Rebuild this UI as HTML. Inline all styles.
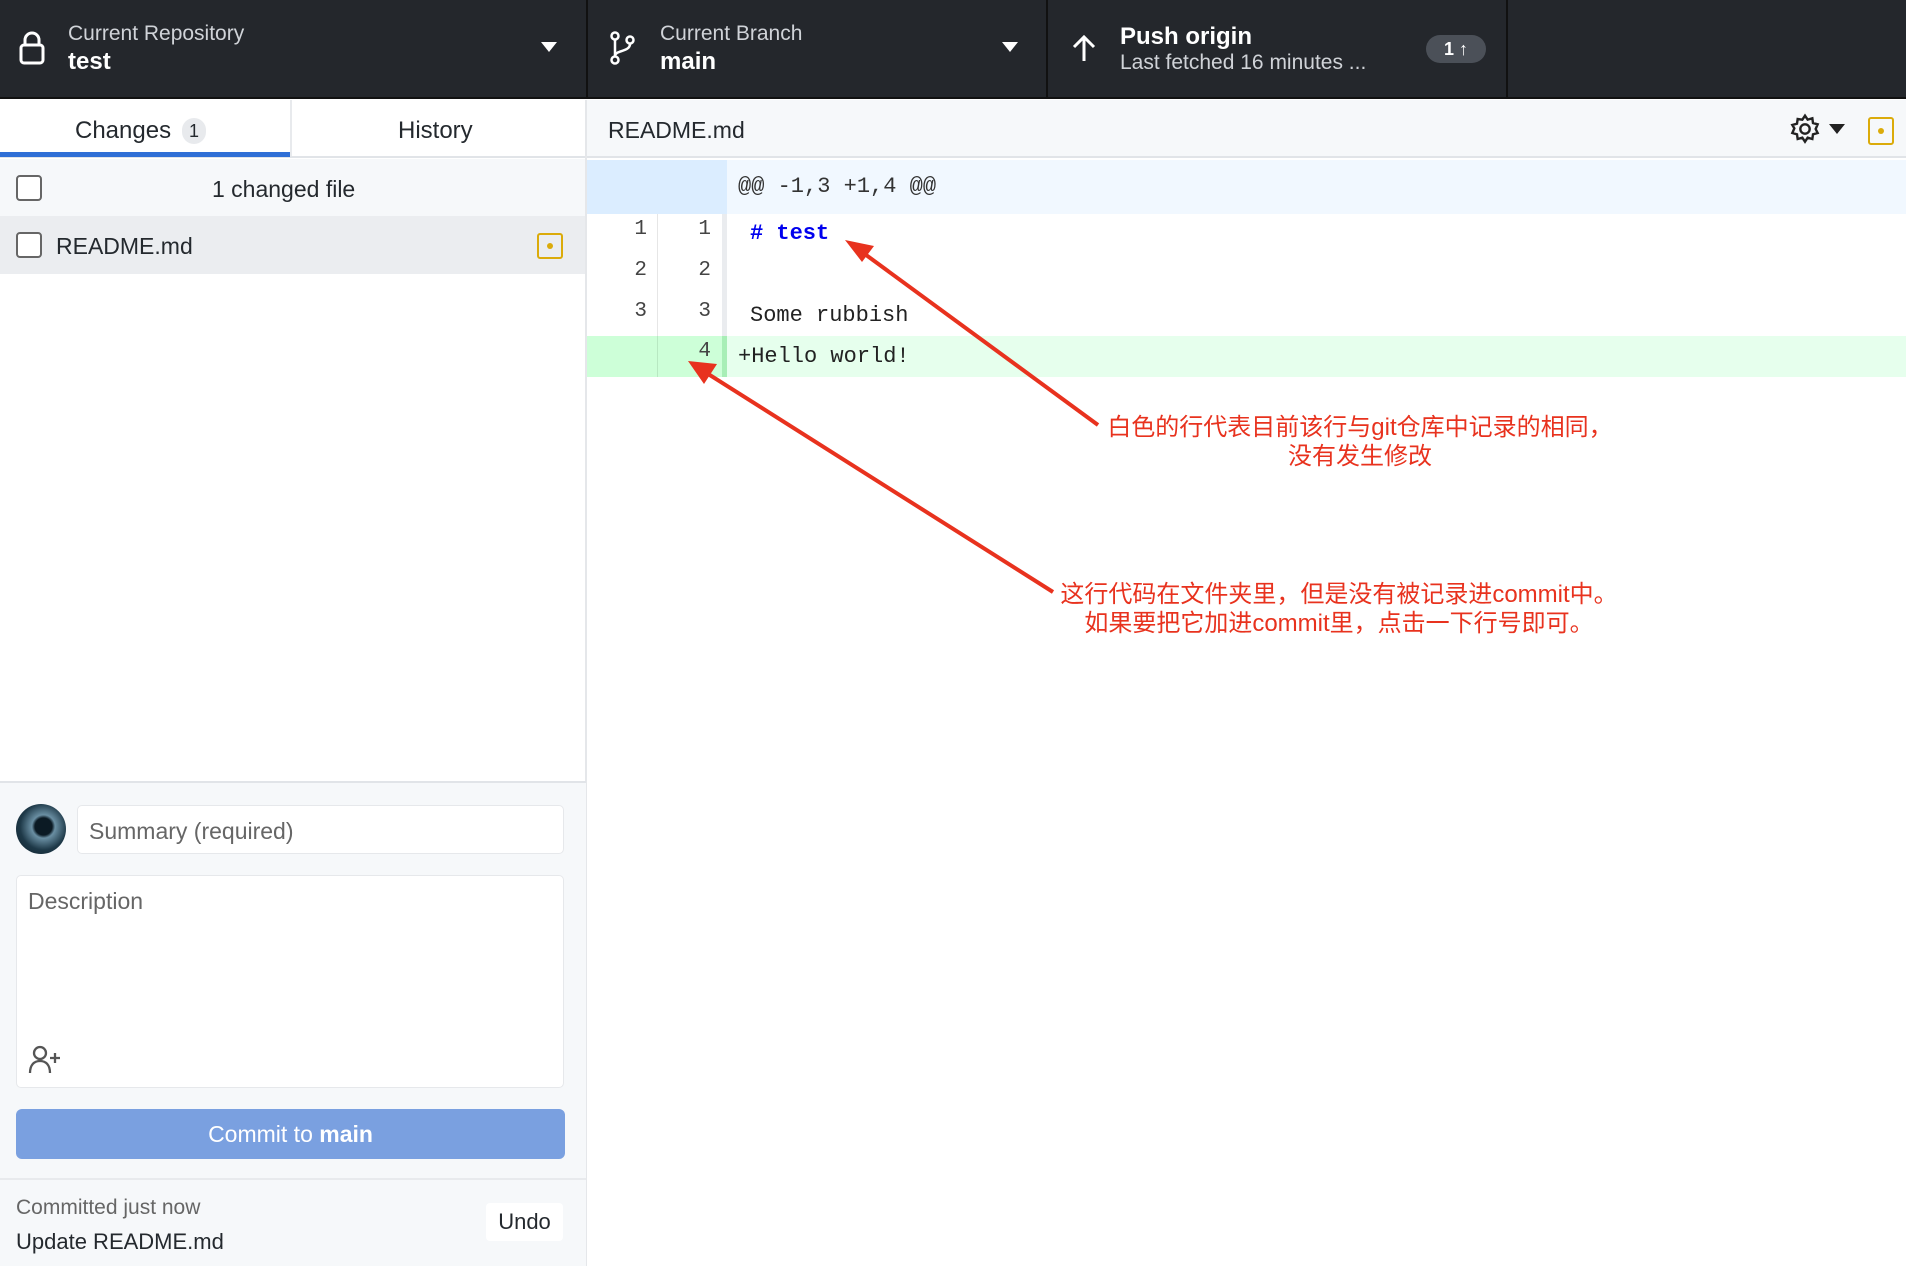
<!DOCTYPE html>
<html><head><meta charset="utf-8"><style>
*{box-sizing:border-box;margin:0;padding:0}
body{width:1906px;height:1266px;overflow:hidden;background:#fff;font-family:"Liberation Sans","Noto Sans CJK SC",sans-serif;position:relative;color:#24292e}
.a{position:absolute}
.hdr{left:0;top:0;width:1906px;height:99px;background:#24272c;border-bottom:2px solid #111}
.sep{top:0;width:2px;height:99px;background:#111}
.lbl{color:#d0d3d8;font-size:21px}
.val{color:#fff;font-size:24px;font-weight:bold}
.mono{font-family:"Liberation Mono",monospace;font-size:22px}
.cb{width:26px;height:26px;border:2px solid #666;border-radius:4px;background:#fff}
.ln{font-family:"Liberation Mono",monospace;font-size:21px;color:#444;text-align:right;width:60px}
.note{color:#e8321e;font-size:24px;text-align:center;width:600px;line-height:29px}
</style></head><body>
<div class="a hdr"></div>
<div class="a sep" style="left:586px"></div>
<div class="a sep" style="left:1046px"></div>
<div class="a sep" style="left:1506px"></div>
<svg class="a" style="left:18px;top:30px" width="28" height="36" viewBox="0 0 28 36"><rect x="3" y="15" width="22" height="18" rx="3" fill="none" stroke="#fff" stroke-width="3"/><path d="M7 15V10a7 7 0 0 1 14 0v5" fill="none" stroke="#fff" stroke-width="3"/></svg>
<div class="a lbl" style="left:68px;top:22px">Current Repository</div>
<div class="a val" style="left:68px;top:48px">test</div>
<svg class="a" style="left:541px;top:42px" width="16" height="10"><path d="M0 0h16L8 10z" fill="#fff"/></svg>
<svg class="a" style="left:609px;top:30px" width="28" height="36" viewBox="0 0 28 36" fill="none" stroke="#fff" stroke-width="2.5"><circle cx="6" cy="6" r="3.5"/><circle cx="6" cy="30" r="3.5"/><circle cx="21" cy="10" r="3.5"/><path d="M6 10v16M21 14c0 8-15 6-15 12"/></svg>
<div class="a lbl" style="left:660px;top:22px">Current Branch</div>
<div class="a val" style="left:660px;top:48px">main</div>
<svg class="a" style="left:1002px;top:42px" width="16" height="10"><path d="M0 0h16L8 10z" fill="#fff"/></svg>
<svg class="a" style="left:1072px;top:34px" width="24" height="28" viewBox="0 0 24 28" fill="none" stroke="#fff" stroke-width="3"><path d="M12 27V3M2 13L12 3l10 10"/></svg>
<div class="a val" style="left:1120px;top:23px">Push origin</div>
<div class="a lbl" style="left:1120px;top:51px">Last fetched 16 minutes ...</div>
<div class="a" style="left:1426px;top:35px;width:60px;height:28px;border-radius:14px;background:#4b5058;color:#fff;font-size:18px;font-weight:bold;text-align:center;line-height:28px">1 ↑</div>

<div class="a" style="left:0;top:100px;width:587px;height:58px;background:#fff;border-bottom:2px solid #e1e4e8"></div>
<div class="a" style="left:0;top:152px;width:290px;height:5px;background:#2f6fd6"></div>
<div class="a" style="left:290px;top:100px;width:2px;height:56px;background:#e8eaed"></div>
<div class="a" style="left:75px;top:117px;font-size:24px">Changes</div>
<div class="a" style="left:182px;top:118px;width:24px;height:26px;background:#e8eaed;border-radius:12px;font-size:18px;text-align:center;line-height:26px">1</div>
<div class="a" style="left:398px;top:117px;font-size:24px">History</div>
<div class="a" style="left:0;top:159px;width:587px;height:57px;background:#f6f8fa"></div>
<div class="a cb" style="left:16px;top:175px"></div>
<div class="a" style="left:212px;top:176px;font-size:23px">1 changed file</div>
<div class="a" style="left:0;top:216px;width:587px;height:58px;background:#ebedf0"></div>
<div class="a cb" style="left:16px;top:232px"></div>
<div class="a" style="left:56px;top:233px;font-size:23px">README.md</div>
<div class="a" style="left:537px;top:233px;width:26px;height:26px;border:2.5px solid #dbab0a;border-radius:3px"><div class="a" style="left:8px;top:8px;width:6px;height:6px;background:#dbab0a;border-radius:50%"></div></div>
<div class="a" style="left:585px;top:100px;width:2px;height:1166px;background:#e5e7ea"></div>

<div class="a" style="left:0;top:781px;width:586px;height:485px;background:#f6f8fa;border-top:2px solid #e1e4e8"></div>
<div class="a" style="left:16px;top:804px;width:50px;height:50px;border-radius:50%;background:radial-gradient(circle at 55% 45%,#0b1a24 0 22%,#6a8fa3 30%,#1e3948 60%,#0e1d27 100%)"></div>
<div class="a" style="left:77px;top:805px;width:487px;height:49px;background:#fff;border:1px solid #e6e8eb;border-radius:5px;font-size:23px;color:#666;padding:12px 11px">Summary (required)</div>
<div class="a" style="left:16px;top:875px;width:548px;height:213px;background:#fff;border:1px solid #e6e8eb;border-radius:5px;font-size:23px;color:#666;padding:12px 11px">Description</div>
<svg class="a" style="left:28px;top:1044px" width="36" height="30" viewBox="0 0 36 30" fill="none" stroke="#555" stroke-width="2.3"><circle cx="12" cy="9" r="6"/><path d="M2 29c0-8 4-12 10-12s10 4 10 12M27 9v10M22 14h10"/></svg>
<div class="a" style="left:16px;top:1109px;width:549px;height:50px;background:#7aa0e0;border-radius:6px;color:#fff;font-size:23px;text-align:center;line-height:50px">Commit to <b>main</b></div>
<div class="a" style="left:0;top:1178px;width:586px;height:2px;background:#e8eaed"></div>
<div class="a" style="left:16px;top:1196px;font-size:21px;color:#666">Committed just now</div>
<div class="a" style="left:16px;top:1229px;font-size:22px">Update README.md</div>
<div class="a" style="left:486px;top:1203px;width:77px;height:38px;background:#fff;border-radius:4px;font-size:22px;text-align:center;line-height:38px">Undo</div>

<div class="a" style="left:587px;top:100px;width:1319px;height:58px;background:#f6f8fa;border-bottom:2px solid #e1e4e8"></div>
<div class="a" style="left:608px;top:117px;font-size:23px">README.md</div>
<svg class="a" style="left:1789px;top:113px" width="32" height="32" viewBox="0 0 24 24" fill="none" stroke="#222" stroke-width="1.8"><circle cx="12" cy="12" r="3.5"/><path d="M12 2l2 3 3.5-1 .5 3.5 3.5 1-1.5 3.5 1.5 3-3.5 1-.5 3.5-3.5-1-2 3-2-3-3.5 1-.5-3.5-3.5-1 1.5-3.5L2.5 9l3.5-1 .5-3.5L10 5z"/></svg>
<svg class="a" style="left:1829px;top:124px" width="16" height="10"><path d="M0 0h16L8 10z" fill="#222"/></svg>
<div class="a" style="left:1868px;top:117px;width:26px;height:28px;border:2.5px solid #dbab0a;border-radius:3px"><div class="a" style="left:8px;top:9px;width:6px;height:6px;background:#dbab0a;border-radius:50%"></div></div>

<div class="a" style="left:587px;top:160px;width:1319px;height:54px;background:#f1f8ff"></div>
<div class="a" style="left:587px;top:160px;width:140px;height:54px;background:#dbedff"></div>
<div class="a mono" style="left:738px;top:174px;color:#333">@@ -1,3 +1,4 @@</div>
<div class="a" style="left:657px;top:214px;width:1px;height:163px;background:#e6e6e6"></div>
<div class="a" style="left:722px;top:214px;width:5px;height:122px;background:#eaecef"></div>
<div class="a ln" style="left:587px;top:218px">1</div><div class="a ln" style="left:651px;top:218px">1</div>
<div class="a ln" style="left:587px;top:259px">2</div><div class="a ln" style="left:651px;top:259px">2</div>
<div class="a ln" style="left:587px;top:300px">3</div><div class="a ln" style="left:651px;top:300px">3</div>
<div class="a mono" style="left:750px;top:221px;color:#0000ee;font-weight:bold"># test</div>
<div class="a mono" style="left:750px;top:303px;color:#222">Some rubbish</div>
<div class="a" style="left:587px;top:336px;width:1319px;height:41px;background:#e6ffed"></div>
<div class="a" style="left:587px;top:336px;width:140px;height:41px;background:#cdffd8"></div>
<div class="a" style="left:722px;top:336px;width:5px;height:41px;background:#a8eeb6"></div>
<div class="a" style="left:657px;top:336px;width:1px;height:41px;background:#b8e8c2"></div>
<div class="a ln" style="left:651px;top:340px">4</div>
<div class="a mono" style="left:738px;top:344px;color:#222">+Hello world!</div>

<svg class="a" style="left:0;top:0" width="1906" height="1266">
<g stroke="#e8321e" stroke-width="4" fill="#e8321e">
<line x1="1098" y1="425" x2="862" y2="252"/>
<path d="M845 240L874 246L862 262z" stroke="none"/>
<line x1="1053" y1="592" x2="705" y2="372"/>
<path d="M688 361L717 364L704 384z" stroke="none"/>
</g></svg>
<div class="a note" style="left:1060px;top:413px">白色的行代表目前该行与git仓库中记录的相同，<br>没有发生修改</div>
<div class="a note" style="left:1039px;top:580px">这行代码在文件夹里，但是没有被记录进commit中。<br>如果要把它加进commit里，点击一下行号即可。</div>
</body></html>
